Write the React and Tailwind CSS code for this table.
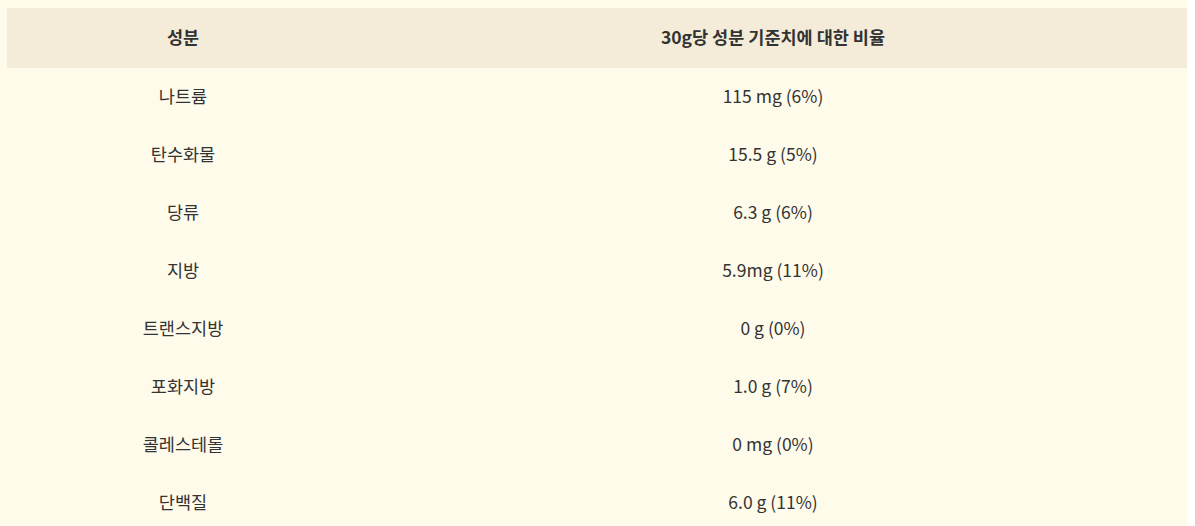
import React from "react";

const rows = [
  ["나트륨", "115 mg (6%)"],
  ["탄수화물", "15.5 g (5%)"],
  ["당류", "6.3 g (6%)"],
  ["지방", "5.9mg (11%)"],
  ["트랜스지방", "0 g (0%)"],
  ["포화지방", "1.0 g (7%)"],
  ["콜레스테롤", "0 mg (0%)"],
  ["단백질", "6.0 g (11%)"],
];

export default function App() {
  return (
    <div
      className="min-h-screen bg-white"
      style={{ fontFamily: '"Noto Sans CJK KR", "Noto Sans", sans-serif' }}
    >
      <div className="w-[1187px] bg-[#fffbeb] pt-2 pl-[7px]">
        <table className="w-[1180px] border-collapse text-[17.5px] leading-[20px] text-[#333]">
          <thead>
            <tr className="bg-[#f4ecd8] h-[60px]">
              <th className="w-[352px] font-bold pb-[3px]">성분</th>
              <th className="font-bold pb-[3px]">30g당 성분 기준치에 대한 비율</th>
            </tr>
          </thead>
          <tbody>
            {rows.map(([name, value]) => (
              <tr key={name} className="h-[58px] bg-[#fffbeb]">
                <td className="text-center pb-[3px]">{name}</td>
                <td className="text-center pb-[3px]">{value}</td>
              </tr>
            ))}
          </tbody>
        </table>
      </div>
    </div>
  );
}
